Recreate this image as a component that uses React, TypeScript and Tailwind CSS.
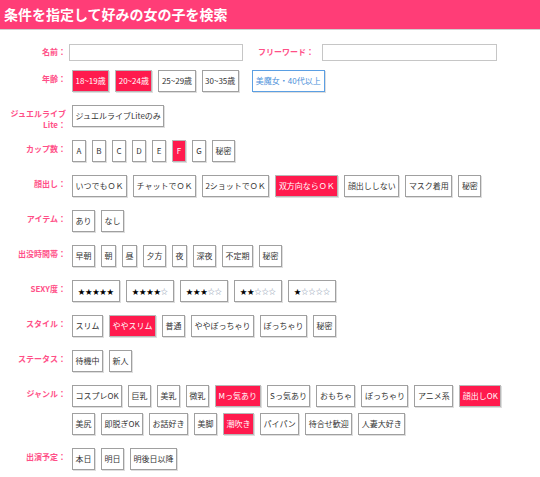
import React from 'react';

type Opt = { label: string; on?: boolean; blue?: boolean };

const font = { fontFamily: '"Noto Sans CJK JP", "Noto Sans", sans-serif' };

const rows: { label: React.ReactNode; options: Opt[]; stars?: boolean }[] = [
  {
    label: '年齢：',
    options: [
      { label: '18~19歳', on: true },
      { label: '20~24歳', on: true },
      { label: '25~29歳' },
      { label: '30~35歳' },
      { label: '美魔女・40代以上', blue: true },
    ],
  },
  {
    label: (
      <>
        ジュエルライブ
        <br />
        Lite：
      </>
    ),
    options: [{ label: 'ジュエルライブLiteのみ' }],
  },
  {
    label: 'カップ数：',
    options: ['A', 'B', 'C', 'D', 'E', 'F', 'G', '秘密'].map(l => ({ label: l, on: l === 'F' })),
  },
  {
    label: '顔出し：',
    options: [
      { label: 'いつでもＯＫ' },
      { label: 'チャットでＯＫ' },
      { label: '2ショットでＯＫ' },
      { label: '双方向ならＯＫ', on: true },
      { label: '顔出ししない' },
      { label: 'マスク着用' },
      { label: '秘密' },
    ],
  },
  { label: 'アイテム：', options: [{ label: 'あり' }, { label: 'なし' }] },
  {
    label: '出没時間帯：',
    options: ['早朝', '朝', '昼', '夕方', '夜', '深夜', '不定期', '秘密'].map(l => ({ label: l })),
  },
  {
    label: 'SEXY度：',
    stars: true,
    options: [5, 4, 3, 2, 1].map(n => ({ label: String(n) })),
  },
  {
    label: 'スタイル：',
    options: [
      { label: 'スリム' },
      { label: 'ややスリム', on: true },
      { label: '普通' },
      { label: 'ややぽっちゃり' },
      { label: 'ぽっちゃり' },
      { label: '秘密' },
    ],
  },
  { label: 'ステータス：', options: [{ label: '待機中' }, { label: '新人' }] },
  {
    label: 'ジャンル：',
    options: [
      { label: 'コスプレOK' },
      { label: '巨乳' },
      { label: '美乳' },
      { label: '微乳' },
      { label: 'Mっ気あり', on: true },
      { label: 'Sっ気あり' },
      { label: 'おもちゃ' },
      { label: 'ぽっちゃり' },
      { label: 'アニメ系' },
      { label: '顔出しOK', on: true },
      { label: '美尻' },
      { label: '即脱ぎOK' },
      { label: 'お話好き' },
      { label: '美脚' },
      { label: '潮吹き', on: true },
      { label: 'パイパン' },
      { label: '待合せ歓迎' },
      { label: '人妻大好き' },
    ],
  },
  { label: '出演予定：', options: [{ label: '本日' }, { label: '明日' }, { label: '明後日以降' }] },
];

const Stars = ({ n }: { n: number }) => (
  <span className="text-[7px] leading-none tracking-[0.2px]">
    {[0, 1, 2, 3, 4].map(i =>
      i < n ? (
        <span key={i} className="text-black">★</span>
      ) : (
        <span key={i} className="text-[#7d8ea8]">☆</span>
      )
    )}
  </span>
);

const Chip = ({ opt, stars }: { opt: Opt; stars?: boolean }) => {
  const base =
    'h-[22px] min-w-[14px] flex items-center justify-center border text-[8px] leading-[12px] shadow-[1px_1px_0_#dedede]';
  if (opt.blue) {
    return (
      <span className={`${base} ml-[7px] px-[3px] border-[#5b9fe3] text-[#4a8fd9] bg-white`}>{opt.label}</span>
    );
  }
  return (
    <span
      className={`${base} ${stars ? 'px-[5px]' : 'px-[2.5px]'} ${
        opt.on ? 'bg-[#ff1a4d] text-white border-[#b8b8b8]' : 'bg-white text-[#333] border-[#a0a0a0]'
      }`}
    >
      {stars ? <Stars n={Number(opt.label)} /> : opt.label}
    </span>
  );
};

export default function App() {
  return (
    <div className="w-[540px] h-[477px] bg-white overflow-hidden" style={font}>
      <div className="h-[30px] bg-[#ff3d77] border-b border-[#cfcfcf]">
        <h1 className="pl-[4px] text-[14px] leading-[29px] font-bold text-white">条件を指定して好みの女の子を検索</h1>
      </div>

      <div className="pt-[14px]">
        <div className="flex items-center h-[16px]">
          <div className="w-[66px] text-right text-[8px] font-bold text-[#ff4f87]">名前：</div>
          <input className="ml-[3px] w-[174px] h-[17px] border border-[#c6c6c6]" />
          <div className="ml-[15px] text-[8px] font-bold text-[#ff4f87]">フリーワード：</div>
          <input className="ml-[8px] w-[175px] h-[17px] border border-[#c6c6c6]" />
        </div>

        <div className="mt-[10px] flex flex-col gap-[13px]">
          {rows.map((row, i) => (
            <div key={i} className="flex items-start">
              <div className="w-[66px] shrink-0 h-[22px] pt-[3px] text-right text-[8px] leading-[11px] font-bold text-[#ff4f87] whitespace-nowrap">
                {row.label}
              </div>
              <div className="ml-[6px] w-[440px] flex flex-wrap gap-x-[6px] gap-y-[6px]">
                {row.options.map((o, j) => (
                  <Chip key={j} opt={o} stars={row.stars} />
                ))}
              </div>
            </div>
          ))}
        </div>
      </div>
    </div>
  );
}
